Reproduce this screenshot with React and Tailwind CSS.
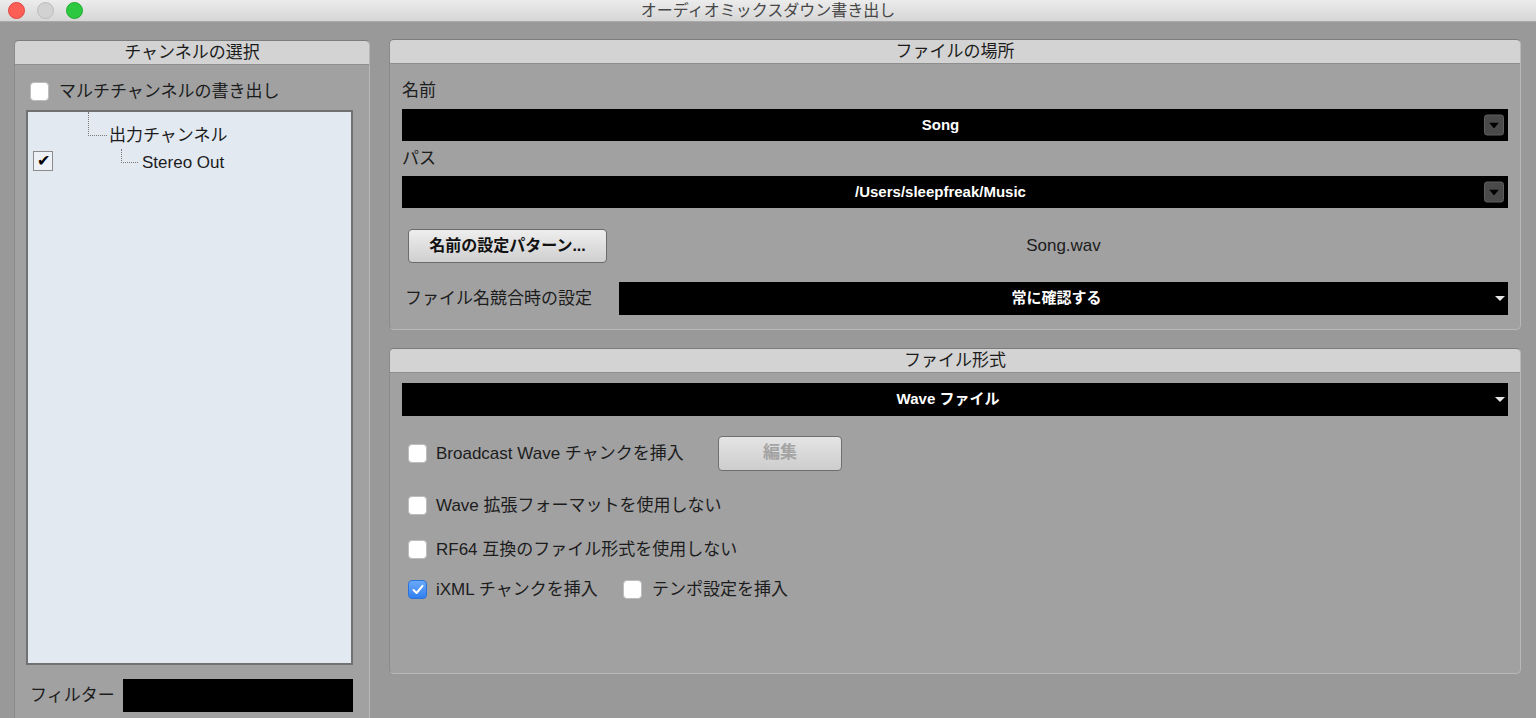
import React from "react";

const FONT = "font-['Liberation_Sans','Noto_Sans_CJK_JP',sans-serif]";

function MacBox({ checked }) {
  if (checked) {
    return (
      <div className="w-[19px] h-[19px] shrink-0 rounded-[4px] bg-gradient-to-b from-[#6aa9f8] to-[#2f7ff1] border border-[#2c73d8] flex items-center justify-center">
        <svg width="12" height="11" viewBox="0 0 12 11">
          <path d="M1.5 6 L4.6 9 L10.5 1.8" fill="none" stroke="#ffffff" strokeWidth="2" strokeLinecap="round" strokeLinejoin="round" />
        </svg>
      </div>
    );
  }
  return <div className="w-[19px] h-[19px] shrink-0 rounded-[4px] bg-white border border-[#bdbdbd]" />;
}

function Panel({ title, className, children }) {
  return (
    <div className={"rounded-[5px] border border-t-[#7c7c7c] border-l-[#8a8a8a] border-r-[#b8b8b8] border-b-[#b8b8b8] bg-[#a1a1a2] flex flex-col overflow-hidden " + className}>
      <div className="h-[24px] shrink-0 bg-[#d3d3d3] border-b border-[#8e8e8e] flex items-center justify-center text-[17px] text-[#1c1c1c] leading-none">
        {title}
      </div>
      {children}
    </div>
  );
}

function BigArrow() {
  return (
    <div className="w-[20px] h-[21px] rounded-[3px] bg-[#4a4a4a] border border-[#5e5e5e] flex items-center justify-center">
      <svg width="10" height="6" viewBox="0 0 10 6">
        <path d="M0 0 L10 0 L5 6 Z" fill="#000000" />
      </svg>
    </div>
  );
}

function SmallArrow() {
  return (
    <svg width="10" height="6" viewBox="0 0 10 6">
      <path d="M0 0 L10 0 L5 5 Z" fill="#e6e6e6" />
    </svg>
  );
}

function BlackField({ text, h, arrow, pad }) {
  return (
    <div className={"relative bg-black flex items-center justify-center " + h + " " + pad}>
      <span className="text-white font-bold text-[15px]">{text}</span>
      {arrow === "big" && (
        <div className="absolute right-[4px] top-1/2 -translate-y-1/2">
          <BigArrow />
        </div>
      )}
      {arrow === "small" && (
        <div className="absolute right-[3px] top-1/2 -translate-y-1/2 flex">
          <SmallArrow />
        </div>
      )}
    </div>
  );
}

export default function App() {
  return (
    <div className={"w-[1536px] h-[718px] overflow-hidden bg-[#99999a] flex flex-col text-[#1c1c1c] " + FONT}>
      {/* Title bar */}
      <div className="relative h-[22px] shrink-0 bg-gradient-to-b from-[#ececec] to-[#d6d6d6] border-b border-[#a9a9a9] flex items-center justify-center">
        <div className="absolute left-[8px] top-[2px] flex gap-[12px]">
          <div className="w-[17px] h-[17px] rounded-full bg-[#fd5f57] border border-[#e2463f]" />
          <div className="w-[17px] h-[17px] rounded-full bg-[#d2d2d2] border border-[#bcbcbc]" />
          <div className="w-[17px] h-[17px] rounded-full bg-[#2bc840] border border-[#1fae31]" />
        </div>
        <span className="text-[16px] text-[#474747] leading-none">オーディオミックスダウン書き出し</span>
      </div>

      {/* Body */}
      <div className="flex pl-[14px] pt-[17px] gap-[19px] min-h-0">
        {/* Left panel */}
        <Panel title="チャンネルの選択" className="w-[356px] h-[700px] mt-[1px] shrink-0">
          <div className="flex flex-col">
            <div className="mt-[16px] h-[20px] flex items-center pl-[15px] gap-[10px]">
              <MacBox />
              <span className="text-[17px] leading-none">マルチチャンネルの書き出し</span>
            </div>
            <div className="mt-[9px] ml-[11px] w-[327px] h-[555px] bg-[#e3e9f1] border-2 border-[#707172] flex flex-col">
              <div className="flex items-start pl-[60px]">
                <div className="w-[19px] h-[24px] border-l border-b border-dotted border-[#7a7a7a]" />
                <span className="ml-[2px] mt-[14px] leading-[20px] text-[17px]">出力チャンネル</span>
              </div>
              <div className="flex items-start pl-[5px]">
                <div className="mt-[5px] w-[20px] h-[20px] border border-[#8c8c8c] bg-[#eef1f5] flex items-center justify-center text-[16px] leading-none text-black">✔</div>
                <div className="ml-[68px] mt-[3px] w-[17px] h-[14px] border-l border-b border-dotted border-[#7a7a7a]" />
                <span className="ml-[4px] mt-[7px] leading-[20px] text-[17px]">Stereo Out</span>
              </div>
            </div>
            <div className="mt-[14px] h-[33px] flex items-center pl-[15px]">
              <span className="w-[93px] text-[17px] leading-none">フィルター</span>
              <div className="w-[230px] h-[33px] bg-black" />
            </div>
          </div>
        </Panel>

        {/* Right column */}
        <div className="flex flex-col w-[1132px] gap-[18px] shrink-0">
          <Panel title="ファイルの場所" className="h-[291px]">
            <div className="flex flex-col px-[12px]">
              <div className="pt-[17px] leading-[20px] text-[17px]">名前</div>
              <div className="mt-[8px]">
                <BlackField text="Song" h="h-[32px]" arrow="big" pad="pr-[29px]" />
              </div>
              <div className="mt-[8px] leading-[20px] text-[17px]">パス</div>
              <div className="mt-[7px]">
                <BlackField text="/Users/sleepfreak/Music" h="h-[32px]" arrow="big" pad="pr-[29px]" />
              </div>
              <div className="mt-[21px] h-[34px] grid grid-cols-[217px_1fr] items-center">
                <div className="pl-[6px]">
                  <div className="w-[199px] h-[34px] rounded-[4px] border border-[#6b6b6b] bg-gradient-to-b from-[#eeeeee] to-[#cfcfcf] flex items-center justify-center text-[16px] font-bold text-[#111]">
                    名前の設定パターン...
                  </div>
                </div>
                <div className="text-center text-[17px]">Song.wav</div>
              </div>
              <div className="mt-[19px] h-[33px] grid grid-cols-[217px_1fr] items-center">
                <span className="pl-[3px] text-[17px] leading-none">ファイル名競合時の設定</span>
                <BlackField text="常に確認する" h="h-[33px]" arrow="small" pad="pr-[14px]" />
              </div>
            </div>
          </Panel>

          <Panel title="ファイル形式" className="h-[326px]">
            <div className="flex flex-col px-[12px]">
              <div className="mt-[10px]">
                <BlackField text="Wave ファイル" h="h-[33px]" arrow="small" pad="pr-[14px]" />
              </div>
              <div className="mt-[19px] h-[36px] flex items-center pl-[6px]">
                <MacBox />
                <span className="ml-[9px] w-[282px] text-[17px] leading-none">Broadcast Wave チャンクを挿入</span>
                <div className="w-[124px] h-[35px] rounded-[4px] border-[1.5px] border-[#6e6e6e] bg-gradient-to-b from-[#e4e4e4] to-[#cdcdcd] flex items-center justify-center text-[17px] font-bold text-[#a3a3a3]">
                  編集
                </div>
              </div>
              <div className="mt-[24px] h-[20px] flex items-center pl-[6px]">
                <MacBox />
                <span className="ml-[9px] text-[17px] leading-none">Wave 拡張フォーマットを使用しない</span>
              </div>
              <div className="mt-[24px] h-[20px] flex items-center pl-[6px]">
                <MacBox />
                <span className="ml-[9px] text-[17px] leading-none">RF64 互換のファイル形式を使用しない</span>
              </div>
              <div className="mt-[20px] h-[20px] flex items-center pl-[6px]">
                <MacBox checked />
                <span className="ml-[9px] w-[187px] text-[17px] leading-none">iXML チャンクを挿入</span>
                <MacBox />
                <span className="ml-[10px] text-[17px] leading-none">テンポ設定を挿入</span>
              </div>
            </div>
          </Panel>
        </div>
      </div>
    </div>
  );
}
